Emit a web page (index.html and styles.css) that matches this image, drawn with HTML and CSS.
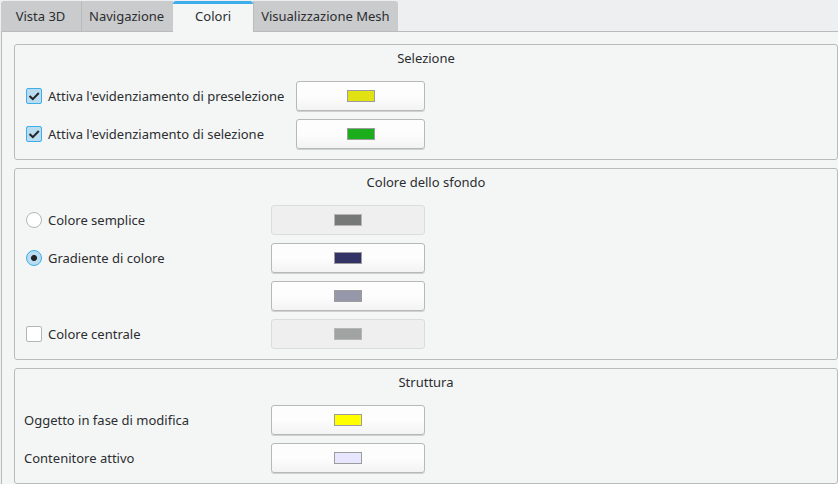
FILE: index.html
```html
<!DOCTYPE html>
<html lang="it">
<head>
<meta charset="utf-8">
<title>Colori</title>
<link rel="stylesheet" href="styles.css">
</head>
<body>
<div class="tabs" role="tablist">
  <button class="tab" role="tab" type="button">Vista 3D</button>
  <button class="tab" role="tab" type="button">Navigazione</button>
  <button class="tab tab-active" role="tab" type="button" aria-selected="true">Colori</button>
  <button class="tab" role="tab" type="button">Visualizzazione Mesh</button>
</div>
<main class="panel">
  <section class="group">
    <h2 class="title">Selezione</h2>
    <div class="rows rows-wide">
      <label class="option"><input class="check" type="checkbox" checked>Attiva l'evidenziamento di preselezione</label>
      <button class="color" type="button" aria-label="Colore di preselezione"><span class="swatch preselection"></span></button>
      <label class="option"><input class="check" type="checkbox" checked>Attiva l'evidenziamento di selezione</label>
      <button class="color" type="button" aria-label="Colore di selezione"><span class="swatch selection"></span></button>
    </div>
  </section>
  <section class="group">
    <h2 class="title">Colore dello sfondo</h2>
    <div class="rows">
      <label class="option"><input class="radio" type="radio" name="background">Colore semplice</label>
      <button class="color" type="button" disabled aria-label="Colore semplice"><span class="swatch simple"></span></button>
      <label class="option"><input class="radio" type="radio" name="background" checked>Gradiente di colore</label>
      <button class="color" type="button" aria-label="Primo colore del gradiente"><span class="swatch gradient-top"></span></button>
      <button class="color second" type="button" aria-label="Secondo colore del gradiente"><span class="swatch gradient-bottom"></span></button>
      <label class="option"><input class="check" type="checkbox">Colore centrale</label>
      <button class="color" type="button" disabled aria-label="Colore centrale"><span class="swatch middle"></span></button>
    </div>
  </section>
  <section class="group">
    <h2 class="title">Struttura</h2>
    <div class="rows">
      <label class="caption" for="editing">Oggetto in fase di modifica</label>
      <button class="color" type="button" id="editing"><span class="swatch editing"></span></button>
      <label class="caption" for="container">Contenitore attivo</label>
      <button class="color" type="button" id="container"><span class="swatch container"></span></button>
    </div>
  </section>
</main>
</body>
</html>
```
FILE: styles.css
```css
* {
  box-sizing: border-box;
}

body {
  margin: 0;
  background: #eeeff1;
  color: #2b2d31;
  font: 13px/18px "Noto Sans", sans-serif;
}

button,
input {
  margin: 0;
  padding: 0;
  font: inherit;
  color: inherit;
}

.tabs {
  display: flex;
  padding: 1px 0 0 1px;
}

.tab {
  height: 31px;
  margin-bottom: -1px;
  padding: 0 8px 0 7px;
  border: 0 solid #b9bbbc;
  border-bottom-width: 1px;
  background: #cacbcc;
}

.tab:first-child {
  width: 80px;
  border-top-left-radius: 3px;
}

.tab:first-child + .tab {
  padding-right: 9px;
  border-left-width: 1px;
}

.tab:last-child {
  border-left-width: 1px;
  border-top-right-radius: 3px;
}

.tab-active {
  position: relative;
  width: 80px;
  border-top: 3px solid #3daee9;
  border-bottom-width: 0;
  border-radius: 3px 3px 0 0;
  background: #f4f6f5;
  padding: 0 8px 4px;
}

.panel {
  display: flex;
  flex-direction: column;
  gap: 8px;
  margin-left: 1px;
  padding: 12px 0 0 12px;
  border: solid #b9bbbc;
  border-width: 1px 0 0 1px;
  background: #f4f6f5;
}

.group {
  padding: 4px 9px 10px;
  border: 1px solid #b9bbbb;
  border-radius: 3px;
}

.title {
  margin: 0 0 14px;
  font-size: 13px;
  font-weight: 400;
  text-align: center;
}

.rows {
  display: grid;
  grid-template-columns: 247px 1fr;
  row-gap: 8px;
  align-items: center;
  width: calc(50% - 1px);
}

.rows-wide {
  grid-template-columns: 272px 1fr;
}

.option {
  display: flex;
  align-items: center;
  gap: 6px;
  padding-left: 2px;
  white-space: nowrap;
}

.check,
.radio {
  appearance: none;
  width: 16px;
  height: 16px;
  border: 1px solid #b3b5b6;
  border-radius: 2px;
  background: #fff;
}

.radio {
  border-radius: 50%;
}

.check:checked,
.radio:checked {
  border-color: #3daee9;
  background-color: #b9dcf0;
}

.check:checked {
  background-image: url("data:image/svg+xml,%3Csvg xmlns='http://www.w3.org/2000/svg' viewBox='0 0 14 14'%3E%3Cpath d='M2.5 7 5.8 10.1 11.8 4' fill='none' stroke='%23232629' stroke-width='2'/%3E%3C/svg%3E");
}

.radio:checked {
  background-image: radial-gradient(circle, #232629 0 2.6px, transparent 3.4px);
}

.color {
  display: flex;
  align-items: center;
  justify-content: center;
  height: 30px;
  border: 1px solid #b7b8b9;
  border-radius: 3px;
  background: linear-gradient(#fdfdfd 50%, #f3f3f3);
  box-shadow: 0 1px 0 #cfd1d1;
}

.color:disabled {
  border-color: #dbdcdc;
  background: #efefef;
  box-shadow: none;
}

.second {
  grid-column: 2;
}

.swatch {
  width: 28px;
  height: 12px;
  border: 1px solid #9c9c9e;
}

.color:disabled .swatch {
  border-color: #b5b6b6;
}

.preselection { background: #e1e114; }
.selection { background: #1cad1c; }
.simple { background: #777878; }
.gradient-top { background: #333366; }
.gradient-bottom { background: #9797aa; }
.middle { background: #a1a2a2; }
.editing { background: #ffff00; }
.container { background: #e6e6ff; }
```
